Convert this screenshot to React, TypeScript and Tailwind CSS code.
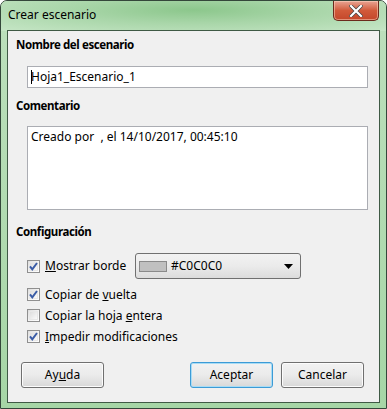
import React from "react";

function Check({ checked }: { checked: boolean }) {
  return (
    <span className="relative flex h-[13px] w-[13px] shrink-0 items-center justify-center border border-[#8f8f8f] bg-gradient-to-br from-[#dcdcdc] via-[#f4f4f4] to-[#ffffff]">
      <span className="absolute inset-[1px] border border-[#e8e8e8] bg-gradient-to-br from-[#dedede] to-[#fafafa]" />
      {checked && (
        <svg viewBox="0 0 11 11" className="relative h-[11px] w-[11px]">
          <path d="M2 5.3 L4.3 8.3 L9 2" fill="none" stroke="#3a5ca6" strokeWidth="2" />
        </svg>
      )}
    </span>
  );
}

function Row({ checked, children }: { checked: boolean; children: React.ReactNode }) {
  return (
    <div className="flex h-[21px] items-center gap-[5px] pl-[19px]">
      <Check checked={checked} />
      <span>{children}</span>
    </div>
  );
}

function Btn({ children, focused }: { children: React.ReactNode; focused?: boolean }) {
  return (
    <div
      className={
        "flex h-[26px] w-[83px] items-center justify-center rounded-[3px] border bg-gradient-to-b from-[#f2f2f2] via-[#ebebeb] to-[#d8d8d8] " +
        (focused ? "border-[#3c9bd6] shadow-[inset_0_0_0_1px_#a8dcf5]" : "border-[#707070] shadow-[inset_0_0_0_1px_#fcfcfc]")
      }
    >
      {children}
    </div>
  );
}

function Heading({ children, mt }: { children: React.ReactNode; mt: string }) {
  return <div className={mt + " pl-[8px] text-[11.5px] font-bold leading-[16px] tracking-[-0.4px]"}>{children}</div>;
}

export default function App() {
  return (
    <div
      className="relative h-[409px] w-[387px] overflow-hidden rounded-t-[7px] border border-[#34473a] bg-gradient-to-b from-[#bde0bd] to-[#a6d6a6] text-[12px] text-black"
      style={{ fontFamily: '"Segoe UI", "Noto Sans", sans-serif' }}
    >
      <div className="absolute inset-x-0 top-0 h-[30px] bg-[radial-gradient(ellipse_at_50%_30%,#8cc78c_0%,#a9d6a9_45%,#c6e6c6_100%)]" />
      <div className="relative flex h-[28px] items-center pl-[7px]">Crear escenario</div>
      <div className="absolute right-[7px] top-0 flex h-[20px] w-[46px] items-center justify-center rounded-b-[5px] border border-t-0 border-[#6b2a1c] bg-gradient-to-b from-[#e8a493] via-[#d15a3a] to-[#c4472a] shadow-[inset_0_0_0_1px_rgba(255,220,200,0.5)]">
        <svg viewBox="0 0 14 12" className="h-[12px] w-[14px]">
          <path d="M2 1 L12 11 M12 1 L2 11" stroke="#444" strokeWidth="3.6" strokeLinecap="square" />
          <path d="M2 1 L12 11 M12 1 L2 11" stroke="#fff" strokeWidth="2.2" strokeLinecap="square" />
        </svg>
      </div>
      <div className="relative mx-[6px] mt-[1px] h-[373px] border border-[#3f5a45] bg-[#f0f0f0] pt-[6px]">
        <Heading mt="mt-0">Nombre del escenario</Heading>
        <div className="ml-[19px] mt-[13px] flex h-[22px] w-[341px] items-center border border-[#abadb3] bg-white pl-[3px]">
          <span className="mr-[-1px] inline-block h-[14px] w-[1px] bg-black" />
          Hoja1_Escenario_1
        </div>
        <Heading mt="mt-[10px]">Comentario</Heading>
        <div className="ml-[19px] mt-[12px] h-[84px] w-[341px] border border-[#abadb3] bg-white pl-[3px] pt-[2px] leading-[15px]">
          Creado por &nbsp;, el 14/10/2017, 00:45:10
        </div>
        <Heading mt="mt-[14px]">Configuración</Heading>
        <div className="mt-[13px] flex h-[26px] items-center">
          <div className="flex w-[127px] items-center gap-[5px] pl-[19px]">
            <Check checked />
            <span>
              <u>M</u>ostrar borde
            </span>
          </div>
          <div className="flex h-[26px] w-[166px] items-center rounded-[3px] border border-[#707070] bg-gradient-to-b from-[#f2f2f2] via-[#ebebeb] to-[#dcdcdc] pl-[3px] pr-[7px]">
            <span className="h-[11px] w-[28px] border border-[#8a8a8a] bg-[#c0c0c0]" />
            <span className="ml-[4px] flex-1">#C0C0C0</span>
            <svg viewBox="0 0 9 5" className="h-[5px] w-[9px]">
              <path d="M0 0 H9 L4.5 5 Z" fill="#000" />
            </svg>
          </div>
        </div>
        <div className="mt-[5px]">
          <Row checked>
            Copiar de <u>v</u>uelta
          </Row>
          <Row checked={false}>
            Copiar la hoja <u>e</u>ntera
          </Row>
          <Row checked>
            <u>I</u>mpedir modificaciones
          </Row>
        </div>
        <div className="mt-[15px] flex pl-[13px]">
          <Btn>
            Ay<u>u</u>da
          </Btn>
          <div className="ml-[86px]">
            <Btn focused>Aceptar</Btn>
          </div>
          <div className="ml-[8px]">
            <Btn>Cancelar</Btn>
          </div>
        </div>
      </div>
    </div>
  );
}
